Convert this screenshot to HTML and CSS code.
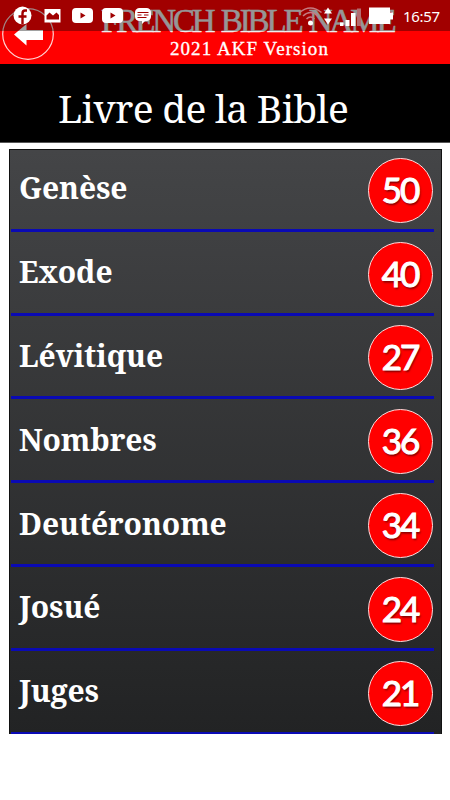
FILE: index.html
```html
<!DOCTYPE html>
<html lang="fr">
<head>
    <meta charset="UTF-8">
    <meta name="viewport" content="width=device-width, initial-scale=1.0">
    <title>Livre de la Bible</title>
    <link rel="stylesheet" href="styles.css">
</head>
<body>
    <div class="status-bar">
        <svg class="status-icons" viewBox="0 0 450 31">
            <circle cx="22.5" cy="15.5" r="9" fill="#fff"/>
            <path d="M27 10.5h-2q-2.500 0-2.500 3v11M18.500 16.500h8" fill="none" stroke="#a00000" stroke-width="2.400"/>
            <rect x="44.500" y="9" width="16" height="13.500" fill="#fff"/>
            <path d="M46.500 19.500v-4l3-3 3.500 3 3.500-3 2.500 2.500v4.500z" fill="#a00000"/>
            <rect x="72" y="8" width="21" height="15" rx="4" fill="#fff"/>
            <path d="M80.500 12.500v6l5-3z" fill="#a00000"/>
            <rect x="102" y="8" width="21" height="15" rx="4" fill="#fff"/>
            <path d="M110.500 12.500v6l5-3z" fill="#a00000"/>
            <path d="M139 8h7a4.500 4.500 0 0 1 5 5v4a4.500 4.500 0 0 1-5 4h-1l-3 3v-3h-3a4.500 4.500 0 0 1-4-4v-4a4.500 4.500 0 0 1 4-5z" fill="#fff"/>
            <path d="M137.500 12.500h11M137.500 15h4M144 15h4.500M137.500 17.500h9" stroke="#a00000" stroke-width="1"/>
            <g fill="none" stroke="#c57b80" stroke-width="1.500">
                <path d="M299.500 12.500q11-9 22 0M303 16q7.500-7 15 0M306.500 19q4-4 8 0"/>
            </g>
            <circle cx="310.500" cy="23" r="2.500" fill="#fff"/>
            <path d="M324 13.500l4-6 4 6zM324 18.500l4 6 4-6z" fill="#fff"/>
            <path d="M340 22.500h3.500V26H340zM345.500 20h4v6h-4zM351 13h4.500v13H351z" fill="#fff"/>
            <path d="M357 8.500h4V26h-4z" fill="#b56c70"/>
            <path d="M369 7.500h21v5h3v7h-3v4.500h-21z" fill="#fff"/>
        </svg>
        <span class="clock">16:57</span>
    </div>
    <header class="app-bar">
        <svg class="back" viewBox="0 0 54 54">
            <circle cx="27" cy="27" r="25.300" fill="none" stroke="#ffd5d5" stroke-width="1.200"/>
            <path d="M13 27.500l12.500-10.500v6H42v10H25.500v5.500z" fill="#fff"/>
        </svg>
        <div class="brand">
            <div class="app-name">FRENCH BIBLE NAME</div>
            <div class="version">2021 AKF Version</div>
        </div>
    </header>
    <h1 class="title">Livre de la Bible</h1>
    <ul class="books">
        <li><span class="name">Genèse</span><span class="count">50</span></li>
        <li><span class="name">Exode</span><span class="count">40</span></li>
        <li><span class="name">Lévitique</span><span class="count">27</span></li>
        <li><span class="name">Nombres</span><span class="count">36</span></li>
        <li><span class="name">Deutéronome</span><span class="count">34</span></li>
        <li><span class="name">Josué</span><span class="count">24</span></li>
        <li><span class="name">Juges</span><span class="count">21</span></li>
    </ul>
</body>
</html>
```
FILE: styles.css
```css
body, html {
    margin: 0;
    padding: 0;
    height: 100%;
    background: #fff;
    overflow: hidden;
}
.status-bar {
    position: absolute;
    top: 0;
    left: 0;
    width: 450px;
    height: 31px;
    background: rgba(0, 0, 0, 0.37);
    z-index: 10;
}
.status-icons {
    display: block;
    width: 450px;
    height: 31px;
}
.clock {
    position: absolute;
    left: 403px;
    top: 7px;
    font: 15px/18px "Noto Sans", sans-serif;
    letter-spacing: -0.3px;
    color: #fff;
}
.app-bar {
    display: flex;
    height: 64px;
    background: #ff0000;
}
.back {
    flex: none;
    width: 54px;
    height: 54px;
    margin: 7px 0 0 1px;
}
.brand {
    padding-left: 46px;
    font-family: "Liberation Serif", serif;
    color: #fff;
    white-space: nowrap;
}
.app-name {
    height: 39px;
    font-size: 33px;
    line-height: 43px;
    letter-spacing: -3.1px;
    word-spacing: 3px;
    -webkit-text-stroke: 0.5px #eee;
    color: #eee;
}
.version {
    padding-left: 69px;
    font-size: 19px;
    line-height: 20px;
    letter-spacing: 1.05px;
    -webkit-text-stroke: 0.3px #fff;
}
.title {
    box-sizing: border-box;
    height: 79px;
    margin: 0;
    padding-left: 58px;
    background: #000;
    border-bottom: 1px solid #555;
    font: 39px/88px "Noto Serif", "DejaVu Serif Condensed", "DejaVu Serif", serif;
    letter-spacing: -0.75px;
    color: #fff;
    white-space: nowrap;
}
.books {
    box-sizing: border-box;
    width: 433px;
    height: 585px;
    margin: 6px 0 0 9px;
    padding: 0 7px 0 1px;
    border: 1px solid #111;
    border-bottom: 0;
    background: linear-gradient(#444547, #222324);
    list-style: none;
    overflow: hidden;
}
.books li {
    display: flex;
    align-items: center;
    justify-content: space-between;
    box-sizing: border-box;
    height: 83.8px;
    padding: 4px 1px 0 8px;
    border-bottom: 3px solid #0a0ab4;
}
.books li:first-child {
    margin-top: -2px;
}
.name {
    padding-bottom: 4px;
    font: bold 30px/40px "Noto Serif", "DejaVu Serif Condensed", "DejaVu Serif", serif;
    letter-spacing: -0.1px;
    color: #fff;
}
.count {
    box-sizing: border-box;
    width: 65px;
    height: 65px;
    padding-right: 1px;
    border: 1.5px solid #ffdcdc;
    border-radius: 50%;
    background: #ff0000;
    font: 35px/60px Lato, sans-serif;
    letter-spacing: -2px;
    text-align: center;
    -webkit-text-stroke: 1.1px #fff;
    text-shadow: 1px 2px 2px rgba(0, 0, 0, 0.5);
    color: #fff;
}
```
